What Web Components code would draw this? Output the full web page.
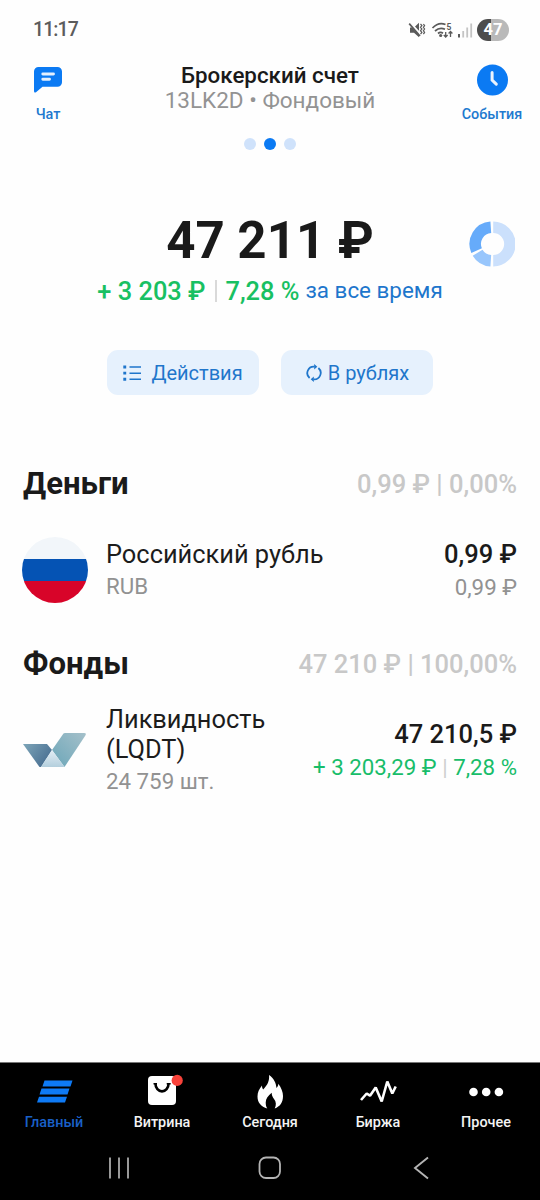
<!DOCTYPE html>
<html lang="ru">
<head>
<meta charset="utf-8">
<title>Брокерский счет</title>
<style>
html,body{margin:0;padding:0;background:#fefefe}
body{width:540px;height:1200px;overflow:hidden;font-family:Roboto,"Liberation Sans",sans-serif;color:#1c1c1e}
</style>
</head>
<body>
<broker-app></broker-app>
<script>
const define = (name, css, html) => {
  const t = document.createElement('template');
  t.innerHTML = `<style>${css}</style>${html}`;
  customElements.define(name, class extends HTMLElement {
    constructor() {
      super();
      this.attachShadow({ mode: 'open' }).appendChild(t.content.cloneNode(true));
    }
  });
};

// Text run; size, weight, tracking and colour come from custom properties.
define('ui-text', `
:host{display:block;white-space:nowrap;font-size:var(--s);font-weight:var(--w,400);letter-spacing:var(--ls,0);color:var(--c,inherit);line-height:var(--lh,30px)}
`, `<slot></slot>`);

define('status-bar', `
:host{display:flex;height:60px;align-items:center;justify-content:space-between;padding:0 31px 0 33px;box-sizing:border-box}
svg{display:block}
.right{display:flex;align-items:center}
.bat{width:32px;height:22px;border-radius:11px;background:linear-gradient(90deg,#4c4c4c 45%,#b9b9b9 45%);display:flex;align-items:center;justify-content:center;--c:#fff;--s:16.5px;--w:700;--lh:22px;margin-left:3px}
`, `<ui-text style="--s:19.500px;--w:500;--c:#5c5c5c;--ls:-.9px">11:17</ui-text>
<div class="right">
<svg width="67" height="24" viewBox="0 0 67 24" fill="none" stroke="#5a5a5a">
 <path d="M3 9.500h4l5-4.800v14.600l-5-4.600H3z" fill="#5a5a5a" stroke="none"/>
 <path d="M2.500 4.500l11 12" stroke="#fefefe" stroke-width="2.600"/><path d="M2.200 5.600l10.800 12.400" stroke-width="1.700"/>
 <path d="M13.500 6l1.400 1.600-1.400 1.700 1.400 1.700-1.400 1.700 1.400 1.700-1.400 1.800M16.400 6l1.200 1.600-1.200 1.700 1.200 1.700-1.200 1.700 1.200 1.700-1.200 1.800" stroke-width="1.200"/>
 <path d="M25.500 10c4-4.300 9-5.300 13-3.500M28 13c3-2.700 7-3.200 10-1.700M31 15.500c1.500-1.300 3.500-1.300 5-.3" stroke-width="1.700"/>
 <circle cx="33.700" cy="17.500" r="1.600" fill="#5a5a5a" stroke="none"/>
 <path d="M38.700 14v5M36.800 17l1.900 2 1.900-2M43.500 19v-5.500M41.600 15.500l1.900-2 1.900 2" stroke-width="1.300"/>
 <text x="39.600" y="11.500" font-size="8.500" font-weight="700" font-family="Roboto" fill="#5a5a5a" stroke="none">5</text>
 <path d="M52 16v3.500" stroke-width="2"/><path d="M56.200 13v6.500M60.200 9.500v10M64.200 5.500v14" stroke="#c4c4c4" stroke-width="1.800"/>
</svg>
<div class="bat"><ui-text>47</ui-text></div>
</div>`);

define('icon-button', `
:host{display:flex;flex-direction:column;align-items:center;width:64px;padding-top:4px;box-sizing:border-box;--s:14.4px;--w:500;--c:#2179cf;--lh:20px}
.i{height:32px;margin-bottom:9.400px;display:flex;align-items:center}
`, `<div class="i"><slot name="icon"></slot></div><ui-text><slot></slot></ui-text>`);

define('page-dots', `
:host{display:flex;gap:8px;justify-content:center;height:12px}
i{width:12px;height:12px;border-radius:50%;background:#cfe2fb}
i.on{background:#0b7af3}
`, `<i></i><i class="on"></i><i></i>`);

define('account-header', `
:host{display:flex;justify-content:space-between;height:90px;padding:0 16px;align-items:flex-start}
.mid{display:flex;flex-direction:column;align-items:center;padding-top:2px}
page-dots{margin-top:25px}
svg{display:block}
`, `<icon-button>
<svg slot="icon" width="30" height="28" viewBox="0 0 30 28"><path d="M5.500 1h19a4.500 4.500 0 0 1 4.500 4.500v10.700a4.500 4.500 0 0 1-4.500 4.500H9.500L3 26.200Q1 27.300 1 25V5.500A4.500 4.500 0 0 1 5.500 1z" fill="#0b7af3"/><path d="M9.800 8h10.700M9.800 13.300h6.700" stroke="#e4f0fe" stroke-width="2.900" stroke-linecap="round"/></svg>
Чат</icon-button>
<div class="mid">
<ui-text style="--s:22.350px;--w:500;--lh:26px;--c:#1a1a1a">Брокерский счет</ui-text>
<ui-text style="--s:22.500px;--c:#939393;--lh:25px">13LK2D • Фондовый</ui-text>
<page-dots></page-dots>
</div>
<icon-button>
<svg slot="icon" width="32" height="32" viewBox="0 0 32 32"><circle cx="16.500" cy="16" r="15.500" fill="#0b7af3"/><path d="M16.100 8.500v7.700l4.200 4" stroke="#eaf3fe" stroke-width="3" fill="none" stroke-linecap="round"/></svg>
События</icon-button>`);

define('balance-summary', `
:host{display:grid;grid-template-columns:1fr auto 1fr;grid-template-rows:56px 40px;height:110px;margin-top:62px;align-items:start}
.sum{grid-column:2;display:flex;justify-content:center;margin-top:.5px}
.pie{justify-self:end;margin:9px 25px 0 0;display:block}
.line{grid-column:1/4;display:flex;justify-content:center;align-items:center;height:34px;margin-top:6px}
.bar{width:2px;height:22px;background:#d9d9d9;margin:0 9px}
`, `<ui-text class="sum" style="--s:51px;--w:700;--lh:56px;--c:#1a1a1a">47 211 ₽</ui-text>
<svg class="pie" width="46" height="46" viewBox="-23 -23 46 46" fill="none" stroke-width="11.500">
<path d="M1.200 -16.700A16.700 16.700 0 0 1 1.200 16.700" stroke="#cbe0fc"/>
<path d="M-1.200 -16.700A16.700 16.700 0 0 0 -15.400 6.600" stroke="#66abfa"/>
<path d="M-14.400 8.700A16.700 16.700 0 0 0 -1.200 16.700" stroke="#98c6fc"/>
</svg>
<div class="line">
<ui-text style="--s:25.400px;--w:500;--c:#18c062">+ 3 203 ₽</ui-text><span class="bar"></span><ui-text style="--s:25.400px;--w:500;--c:#18c062">7,28 %</ui-text>
<ui-text style="--s:22.400px;--c:#1d76cc;margin:-2px 0 0 6px">за все время</ui-text>
</div>`);

define('action-button', `
:host{display:flex;width:152px;height:45px;border-radius:11px;background:#e6f1fd;align-items:center;justify-content:center;gap:var(--gap,9px);--c:#1f76cb;--s:20px}
`, `<slot name="icon"></slot><ui-text><slot></slot></ui-text>`);

define('action-row', `
:host{display:flex;gap:22px;justify-content:center;margin-top:28px}
svg{display:block}
`, `<action-button><svg slot="icon" width="19" height="16" viewBox="0 0 19 16"><path d="M6.500 2h11.500M6.500 8.200h11.500M6.500 14.300h11.500" stroke="#1f76cb" stroke-width="1.500"/><path d="M.3.6h2.900v2.900H.3zM.3 6.700h2.900v2.900H.3zM.3 12.800h2.900v2.900H.3z" fill="#1f76cb"/></svg>Действия</action-button>
<action-button style="--gap:6px;padding-left:1px;width:151px"><svg slot="icon" width="16" height="18" viewBox="0 0 16 18" fill="none" stroke="#1f76cb" stroke-width="1.800"><path d="M3.600 14A6.500 6.500 0 0 1 8.500 2.600M12.400 4A6.500 6.500 0 0 1 7.500 15.400"/><path d="M8.200 0L11.300 2.700 8.200 5.400zM7.800 12.600L4.700 15.300l3.100 2.700z" fill="#1f76cb" stroke="none"/></svg>В рублях</action-button>`);

define('section-head', `
:host{display:flex;justify-content:space-between;align-items:center;padding:0 23px;height:36px}
`, `<ui-text style="--s:31.100px;--w:700;--c:#1a1a1a"><slot></slot></ui-text><ui-text style="--s:25.500px;--w:500;--c:#c8c8c8;margin-top:1px"><slot name="total"></slot></ui-text>`);

define('asset-row', `
:host{display:flex;align-items:center;padding:0 23px 0 22px}
.ic{width:66px;margin-right:18px}
.txt,.val{padding-top:3px}
.val{margin-left:auto;display:flex;flex-direction:column;align-items:flex-end}
.name{--s:25.400px;--lh:30px;--c:#1c1c1c}
.sub{--s:22.300px;--c:#929292;--lh:34px}
.amt{--s:25.500px;--w:500;--lh:31px;--c:#1a1a1a}
.chg{--s:22.300px;--c:#929292;--lh:34px}
`, `<div class="ic"><slot name="icon"></slot></div>
<div class="txt"><ui-text class="name"><slot></slot></ui-text><ui-text class="sub"><slot name="sub"></slot></ui-text></div>
<div class="val"><ui-text class="amt"><slot name="amount"></slot></ui-text><ui-text class="chg"><slot name="change"></slot></ui-text></div>`);

define('tab-item', `
:host{display:flex;flex-direction:column;align-items:center;width:108px;--s:14.400px;--w:500;--c:#f4f4f4;--lh:20px}
.i{height:40px;margin:9px 0 1px;display:flex;align-items:center}
`, `<div class="i"><slot name="icon"></slot></div><ui-text><slot></slot></ui-text>`);

define('tab-bar', `
:host{display:flex;height:78px;background:#000;border-top:1px solid #777;box-sizing:border-box}
svg{display:block;overflow:visible}
.on{--c:#1a60c8}
`, `<tab-item><svg slot="icon" width="36" height="24" viewBox="0 0 36 24" fill="#0e7af5"><path d="M8.500.5h28l-2 6h-28zM5.500 8.500h28l-2 6h-28zM3 16.700h28l-2 5.800H1z"/></svg><ui-text class="on">Главный</ui-text></tab-item>
<tab-item><svg slot="icon" width="36" height="36" viewBox="0 2.600 36 36"><rect x="4" y="4.500" width="28" height="29" rx="4" fill="#fff"/><path d="M11.500 12.500a6.500 7.500 0 0 0 13 0" fill="none" stroke="#000" stroke-width="2.600"/><path d="M9.500 11.700h3.500v1.300h-3.500zM22.700 11.700h4v1.300h-4z"/><circle cx="33.200" cy="9" r="5.600" fill="#f8423a"/></svg>Витрина</tab-item>
<tab-item><svg slot="icon" width="28" height="36" viewBox="0 0 28 36"><path d="M13 1c5 3.500 7 8 7.500 13 1.200-1 1.800-2.500 1.800-4.200 3 4 4.700 8.500 4.700 12.200 0 6.500-3 10.500-8.300 12.500 1.800-3.500 1.500-7-.7-9.500-1.500-1.800-2.300-4-2.300-6.200-3.500 2.800-6 5.800-6 9.700 0 2.500.5 4.500 1.600 6C5 32.500 1.500 28.500 1.500 22.500c0-4.500 1.500-7 4.500-11C6 13 6.200 14.200 7.200 15.500 11.500 11 13.700 6.500 13 1z" fill="#fff"/></svg>Сегодня</tab-item>
<tab-item><svg slot="icon" width="36" height="26" viewBox="0 0 36 26"><path d="M1 21l5.700-6.500 3.300 2.200 5.700-8.200 6 14L27.300 2.500l5 12 3.400-7" fill="none" stroke="#fff" stroke-width="2.600" stroke-linejoin="bevel"/></svg>Биржа</tab-item>
<tab-item><svg slot="icon" width="36" height="10" viewBox="0 0 36 10" fill="#fff"><circle cx="5.500" cy="5" r="4.300"/><circle cx="18.200" cy="5" r="4.300"/><circle cx="30.900" cy="5" r="4.300"/></svg>Прочее</tab-item>`);

define('system-nav', `
:host{display:flex;height:60px;background:#000;padding:0 44px 5px;box-sizing:border-box}
span{flex:1;display:flex;align-items:center;justify-content:center}
`, `<span><svg width="22" height="22"><path d="M2 .5v21M11 .5v21M20 .5v21" stroke="#b4b4b4" stroke-width="1.700"/></svg></span>
<span><svg width="24" height="24"><rect x="1.500" y="1.500" width="20.500" height="20.500" rx="6.500" fill="none" stroke="#b4b4b4" stroke-width="1.800"/></svg></span>
<span><svg width="16" height="24"><path d="M15 1.500L2 12l13 10.500" fill="none" stroke="#b4b4b4" stroke-width="1.900"/></svg></span>`);

define('broker-app', `
:host{display:flex;flex-direction:column;height:1200px}
.s1{margin-top:70.500px}.s2{margin-top:43px}
.r1{margin-top:35px;height:66px}.r2{margin-top:20px;height:96px}
svg{display:block}
tab-bar{margin-top:auto}
.up{color:#18bd6a}.bar{color:#cfcfcf}
`, `<status-bar></status-bar>
<account-header></account-header>
<balance-summary></balance-summary>
<action-row></action-row>
<section-head class="s1">Деньги<span slot="total">0,99 ₽ | 0,00%</span></section-head>
<asset-row class="r1">
<svg slot="icon" width="66" height="66" viewBox="0 0 66 66"><clipPath id="flag"><circle cx="33" cy="33" r="33"/></clipPath><g clip-path="url(#flag)"><path d="M0 0h66v22H0z" fill="#f2f6fa"/><path d="M0 22h66v22H0z" fill="#0553b4"/><path d="M0 44h66v22H0z" fill="#d80429"/></g></svg>Российский рубль<span slot="sub">RUB</span><span slot="amount">0,99 ₽</span><span slot="change">0,99 ₽</span></asset-row>
<section-head class="s2">Фонды<span slot="total">47 210 ₽ | 100,00%</span></section-head>
<asset-row class="r2">
<svg slot="icon" width="66" height="36" viewBox="0 0 66 36">
<defs><linearGradient id="a" x1="0" y1="0" x2="1" y2=".6"><stop offset="0" stop-color="#7da5b8"/><stop offset="1" stop-color="#496f92"/></linearGradient>
<linearGradient id="b" x1="1" y1="0" x2="0" y2="1"><stop offset="0" stop-color="#a5c0ca"/><stop offset="1" stop-color="#6ba6b8"/></linearGradient>
<linearGradient id="c" x1="0" y1="0" x2="0" y2="1"><stop offset="0" stop-color="#e4eef5"/><stop offset="1" stop-color="#b4cfdd"/></linearGradient></defs>
<path d="M1 12h24l5 6-11 17H17.500z" fill="url(#a)"/><path d="M30 18L41.500 1.500Q42 1 43 1H62Q65 1 63.200 3.800L42.500 35z" fill="url(#b)"/><path d="M30 18l12.500 17H19z" fill="url(#c)"/></svg>Ликвидность<br>(LQDT)<span slot="sub">24 759 шт.</span><span slot="amount">47 210,5 ₽</span><span slot="change"><span class="up">+ 3 203,29 ₽</span><span class="bar"> | </span><span class="up">7,28 %</span></span></asset-row>
<tab-bar></tab-bar>
<system-nav></system-nav>`);
</script>
</body>
</html>
